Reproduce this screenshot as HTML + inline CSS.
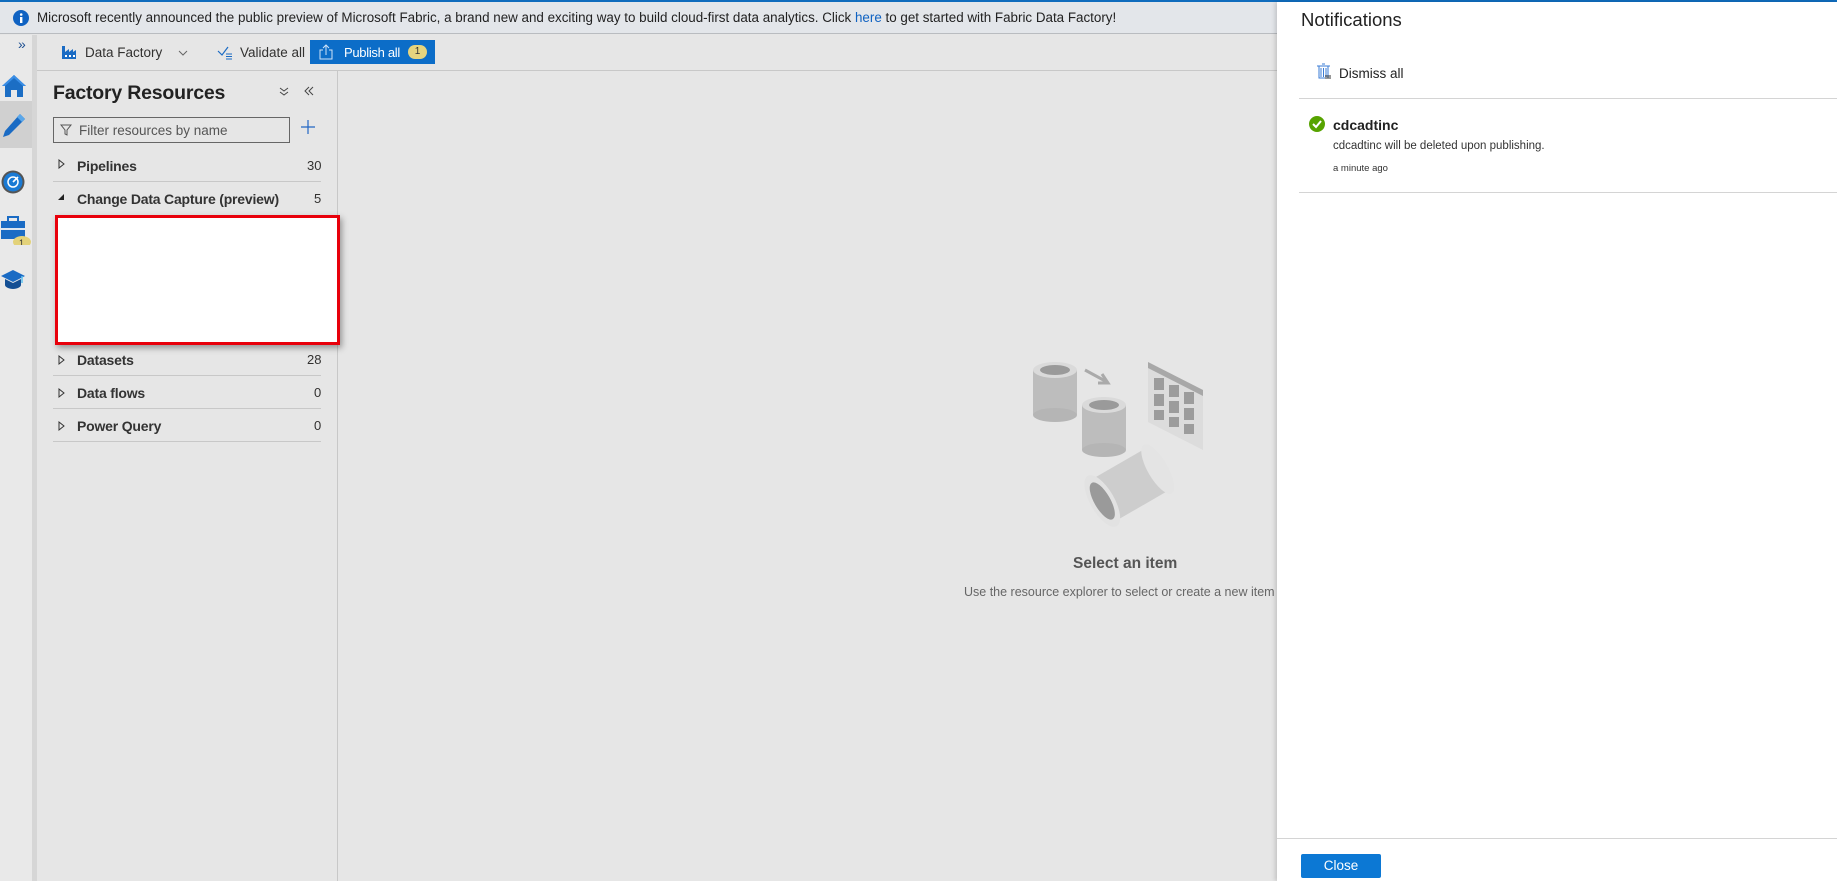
<!DOCTYPE html>
<html><head><meta charset="utf-8"><style>
*{box-sizing:border-box;margin:0;padding:0}
body{width:1837px;height:881px;overflow:hidden;background:#e6e6e6;font-family:"Liberation Sans",sans-serif;color:#323130;position:relative}
.a{position:absolute}
.t{position:absolute;white-space:nowrap}
</style></head><body>
<div class="a" style="left:0;top:0;width:1837px;height:2px;background:#0f6cbd"></div>
<div class="a" style="left:0;top:2px;width:1277px;height:32px;background:#e3e6ea;border-bottom:1px solid #b9bcc0"></div>
<svg class="a" style="left:13px;top:10px" width="16" height="16"><circle cx="8" cy="8" r="8" fill="#0f62c2"/><rect x="7" y="7" width="2.4" height="6" fill="#fff"/><circle cx="8.2" cy="4.5" r="1.3" fill="#fff"/></svg>
<div class="t" style="left:37px;top:10px;font-size:13.4px;color:#222">Microsoft recently announced the public preview of Microsoft Fabric, a brand new and exciting way to build cloud-first data analytics. Click <span style="color:#0f62c2">here</span> to get started with Fabric Data Factory!</div>
<!-- rail -->
<div class="a" style="left:0;top:35px;width:32px;height:846px;background:#e9e9e9"></div>
<div class="a" style="left:32px;top:35px;width:5px;height:846px;background:#d6d6d6"></div>
<div class="t" style="left:18px;top:36px;font-size:14px;color:#1d4f91">»</div>
<div class="a" style="left:0;top:101px;width:32px;height:47px;background:#d0d0d0"></div>
<svg class="a" style="left:1px;top:74px" width="26" height="24"><path d="M13 1L1 12h3v11h6v-7h6v7h6V12h3z" fill="#1c6ec4"/><path d="M13 1L1 12h3L13 4l9 8h3z" fill="#3a8ee6"/></svg>
<svg class="a" style="left:1px;top:112px" width="26" height="26"><path d="M19 2l5 5L8 23l-6 2 2-6z" fill="#1a6bc4"/><path d="M19 2l5 5-3 3-5-5z" fill="#5aa7ea"/></svg>
<svg class="a" style="left:1px;top:170px" width="24" height="24"><circle cx="12" cy="12" r="11.5" fill="#555"/><circle cx="12" cy="12" r="9.5" fill="#1a7ad4"/><circle cx="12" cy="12" r="5" fill="none" stroke="#fff" stroke-width="1.5"/><path d="M12 12l5-5" stroke="#fff" stroke-width="1.6"/></svg>
<svg class="a" style="left:0;top:215px" width="32" height="30"><rect x="1" y="6" width="24" height="18" fill="#1a6bc4"/><rect x="8" y="2" width="10" height="5" fill="none" stroke="#1a6bc4" stroke-width="2"/><rect x="1" y="13" width="24" height="2" fill="#dfe7f0"/><ellipse cx="22" cy="27" rx="9" ry="6" fill="#e3d27a"/><text x="19" y="31" font-size="9" fill="#333" font-family="Liberation Sans">1</text></svg>
<svg class="a" style="left:0;top:268px" width="26" height="22"><path d="M13 2L1 8l12 6 12-6z" fill="#1a6bc4"/><path d="M5 11v6c0 2 4 4 8 4s8-2 8-4v-6l-8 4z" fill="#144f94"/><path d="M22 8v7" stroke="#5ec3f0" stroke-width="1.5"/></svg>
<!-- toolbar -->
<div class="a" style="left:37px;top:35px;width:1240px;height:36px;background:#e6e6e6;border-bottom:1px solid #c8c8c8"></div>
<svg class="a" style="left:61px;top:44px" width="16" height="16"><path d="M1 15V2h3v6l4-3v3l4-3v3l3-2v9z" fill="#1a6bc4"/><rect x="4" y="11" width="2" height="2" fill="#fff"/><rect x="8" y="11" width="2" height="2" fill="#fff"/><rect x="12" y="11" width="2" height="2" fill="#fff"/></svg>
<div class="t" style="left:85px;top:45px;font-size:13.5px">Data Factory</div>
<svg class="a" style="left:178px;top:50px" width="10" height="6"><path d="M1 1l4 4 4-4" fill="none" stroke="#666"/></svg>
<svg class="a" style="left:217px;top:46px" width="16" height="14"><path d="M1 5l4 4 6-8" fill="none" stroke="#1a6bc4" stroke-width="1.2"/><path d="M9 8h6M9 10.5h6M9 13h6" stroke="#1a6bc4"/></svg>
<div class="t" style="left:240px;top:45px;font-size:13.5px">Validate all</div>
<div class="a" style="left:310px;top:40px;width:125px;height:24px;background:#0c6dc8"></div>
<svg class="a" style="left:318px;top:44px" width="16" height="16"><path d="M5 6H2v9h12V6h-3" fill="none" stroke="#cfe3f7"/><path d="M8 11V1M5 4l3-3 3 3" fill="none" stroke="#cfe3f7"/></svg>
<div class="t" style="left:344px;top:45px;font-size:13px;color:#fff;letter-spacing:-0.3px">Publish all</div>
<div class="a" style="left:408px;top:45px;width:19px;height:14px;border-radius:7px;background:#e6d47e;color:#333;font-size:10px;text-align:center;line-height:14px">1</div>
<!-- left panel -->
<div class="a" style="left:337px;top:71px;width:1px;height:810px;background:#c8c8c8"></div>
<div class="t" style="left:53px;top:82px;font-size:19.5px;font-weight:bold;color:#222;letter-spacing:-0.2px">Factory Resources</div>
<svg class="a" style="left:279px;top:87px" width="10" height="10"><path d="M1 1l4 3 4-3M1 5l4 3 4-3" fill="none" stroke="#444"/></svg>
<svg class="a" style="left:304px;top:86px" width="10" height="10"><path d="M5 1L1 5l4 4M9 1L5 5l4 4" fill="none" stroke="#444"/></svg>
<div class="a" style="left:53px;top:117px;width:237px;height:26px;border:1px solid #666;background:#e6e6e6"></div>
<svg class="a" style="left:60px;top:124px" width="12" height="12"><path d="M1 1h10L7 6v5L5 10V6z" fill="none" stroke="#555"/></svg>
<div class="t" style="left:79px;top:123px;font-size:13.5px;color:#555">Filter resources by name</div>
<svg class="a" style="left:300px;top:119px" width="16" height="16"><path d="M8 1v14M1 8h14" stroke="#2266c4" stroke-width="1.2"/></svg>
<svg class="a" style="left:58px;top:159px" width="8" height="10"><path d="M1 1l5 4-5 4z" fill="none" stroke="#333"/></svg>
<div class="t" style="left:77px;top:158px;font-size:14px;font-weight:bold;color:#333;letter-spacing:-0.2px">Pipelines</div><div class="t" style="left:307px;top:158px;font-size:13px">30</div>
<div class="a" style="left:53px;top:181px;width:268px;height:1px;background:#c8c8c8"></div>
<svg class="a" style="left:57px;top:193px" width="8" height="8"><path d="M7 1v6H1z" fill="#222"/></svg>
<div class="t" style="left:77px;top:191px;font-size:14px;font-weight:bold;color:#333;letter-spacing:-0.2px">Change Data Capture (preview)</div><div class="t" style="left:314px;top:191px;font-size:13px">5</div>
<div class="a" style="left:55px;top:215px;width:285px;height:130px;background:#fff;border:3px solid #e8000b;box-shadow:2px 3px 6px rgba(0,0,0,.35)"></div>
<div class="t" style="left:77px;top:352px;font-size:14px;font-weight:bold;color:#333;letter-spacing:-0.2px">Datasets</div><div class="t" style="left:307px;top:352px;font-size:13px">28</div>
<div class="a" style="left:53px;top:375px;width:268px;height:1px;background:#c8c8c8"></div>
<div class="t" style="left:77px;top:385px;font-size:14px;font-weight:bold;color:#333;letter-spacing:-0.2px">Data flows</div><div class="t" style="left:314px;top:385px;font-size:13px">0</div>
<div class="a" style="left:53px;top:408px;width:268px;height:1px;background:#c8c8c8"></div>
<div class="t" style="left:77px;top:418px;font-size:14px;font-weight:bold;color:#333;letter-spacing:-0.2px">Power Query</div><div class="t" style="left:314px;top:418px;font-size:13px">0</div>
<div class="a" style="left:53px;top:441px;width:268px;height:1px;background:#c8c8c8"></div>
<svg class="a" style="left:58px;top:355px" width="8" height="78"><path d="M1 1l5 4-5 4zM1 34l5 4-5 4zM1 67l5 4-5 4z" fill="none" stroke="#333"/></svg>
<!-- illustration -->
<svg class="a" style="left:1030px;top:360px" width="190" height="180">
<rect x="3" y="10" width="44" height="45" fill="#bdbdbd"/><ellipse cx="25" cy="55" rx="22" ry="7" fill="#b5b5b5"/><ellipse cx="25" cy="10" rx="22" ry="8" fill="#dadada"/><ellipse cx="25" cy="10" rx="15" ry="5" fill="#9a9a9a"/>
<rect x="52" y="45" width="44" height="45" fill="#bdbdbd"/><ellipse cx="74" cy="90" rx="22" ry="7" fill="#b5b5b5"/><ellipse cx="74" cy="45" rx="22" ry="8" fill="#dadada"/><ellipse cx="74" cy="45" rx="15" ry="5" fill="#9a9a9a"/>
<path d="M55 10l22 12M72 14l6 9-10 0" fill="none" stroke="#aaa" stroke-width="3"/>
<path d="M118 2l55 28v60l-55-28z" fill="#dcdcdc"/><path d="M118 2l55 28v6l-55-28z" fill="#a8a8a8"/>
<g fill="#9c9c9c"><rect x="124" y="18" width="10" height="12"/><rect x="139" y="25" width="10" height="12"/><rect x="154" y="32" width="10" height="12"/><rect x="124" y="34" width="10" height="12"/><rect x="139" y="41" width="10" height="12"/><rect x="154" y="48" width="10" height="12"/><rect x="124" y="50" width="10" height="10"/><rect x="139" y="57" width="10" height="10"/><rect x="154" y="64" width="10" height="10"/></g>
<g transform="translate(100,125) rotate(-30)">
<rect x="-32" y="-24" width="64" height="48" fill="#cdcdcd"/>
<ellipse cx="32" cy="0" rx="10" ry="28" fill="#e4e4e4"/>
<ellipse cx="-32" cy="0" rx="12" ry="29" fill="#e2e2e2"/>
<ellipse cx="-32" cy="0" rx="8" ry="21" fill="#9a9a9a"/>
</g>
</svg>
<div class="t" style="left:1073px;top:555px;font-size:15.5px;font-weight:bold;color:#555">Select an item</div>
<div class="t" style="left:964px;top:585px;font-size:12.5px;color:#666">Use the resource explorer to select or create a new item</div>
<!-- notifications -->
<div class="a" style="left:1277px;top:2px;width:560px;height:879px;background:#fff;box-shadow:-2px 0 4px rgba(0,0,0,.15)"></div>
<div class="t" style="left:1301px;top:9px;font-size:18.5px;color:#222">Notifications</div>
<svg class="a" style="left:1316px;top:63px" width="16" height="18"><path d="M3 3h9v12H3z" fill="none" stroke="#3a7bd5"/><path d="M1 3h13M6 1h3M5 5v9M7.5 5v9M10 5v9" stroke="#3a7bd5"/><path d="M9 13h6M9 15h6" stroke="#333"/></svg>
<div class="t" style="left:1339px;top:66px;font-size:13.5px;color:#222">Dismiss all</div>
<div class="a" style="left:1299px;top:98px;width:538px;height:1px;background:#d4d4d4"></div>
<svg class="a" style="left:1309px;top:116px" width="16" height="16"><circle cx="8" cy="8" r="8" fill="#57a300"/><path d="M4 8l3 3 5-6" fill="none" stroke="#fff" stroke-width="2"/></svg>
<div class="t" style="left:1333px;top:117px;font-size:14px;font-weight:bold;color:#222">cdcadtinc</div>
<div class="t" style="left:1333px;top:140px;font-size:11.5px;color:#333">cdcadtinc will be deleted upon publishing.</div>
<div class="t" style="left:1333px;top:163px;font-size:9.5px;color:#333">a minute ago</div>
<div class="a" style="left:1299px;top:192px;width:538px;height:1px;background:#d4d4d4"></div>
<div class="a" style="left:1277px;top:838px;width:560px;height:1px;background:#d4d4d4"></div>
<div class="a" style="left:1301px;top:854px;width:80px;height:24px;background:#0c78d4;border-radius:2px;color:#fff;font-size:13.5px;text-align:center;line-height:24px">Close</div>
</body></html>
